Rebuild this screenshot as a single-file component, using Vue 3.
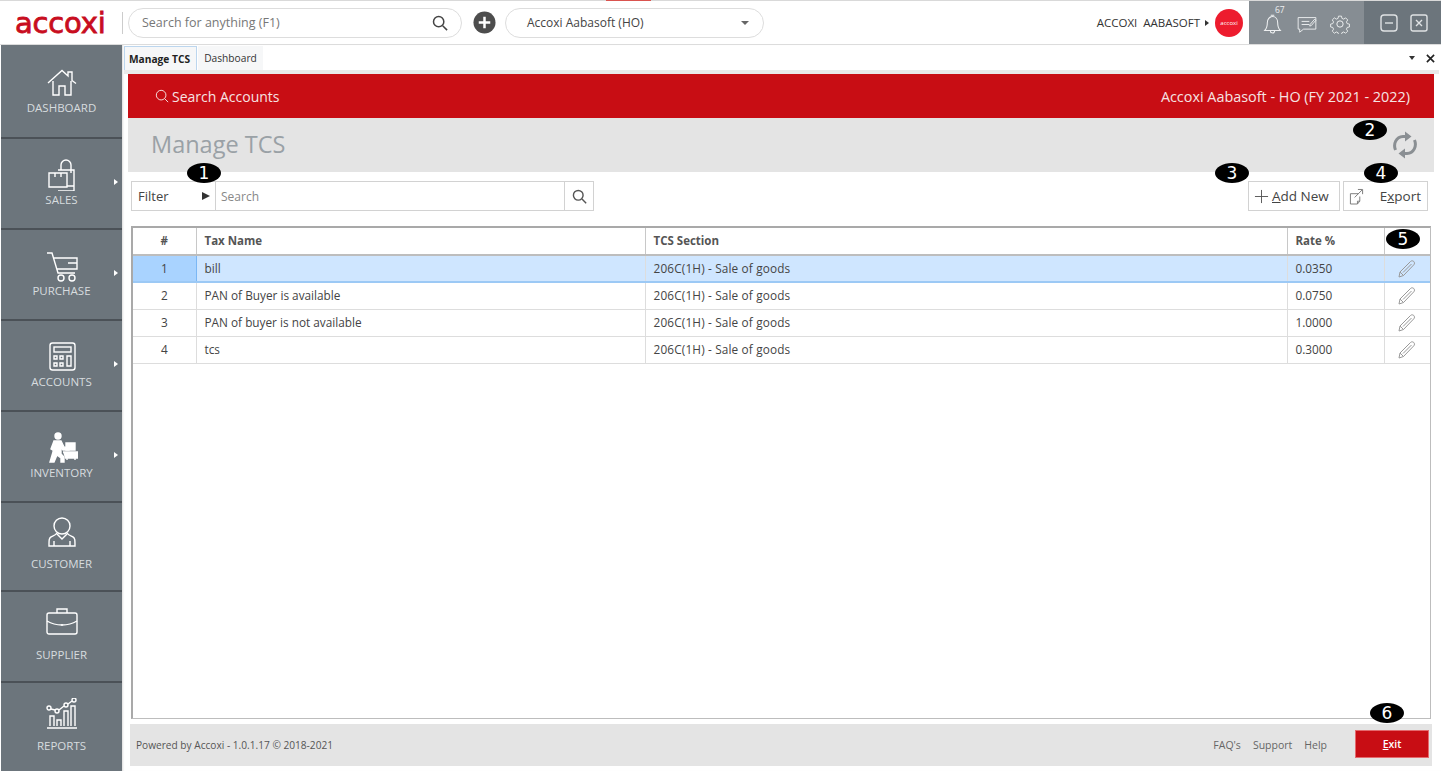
<script setup>
const nav = [
  { label: 'DASHBOARD', low: true, raised: false, arrow: false, icon: '<path d="M2 16 16 3.500l6 5.500V5h4v8.500l4 3M7 14v14h6v-9h6v9h6V14"/>' },
  { label: 'SALES', low: false, raised: false, arrow: true, icon: '<path d="M12 11h16v21H12M12 14H3v14h18V14h-9M28 27H21M9 14v4M15 14v4"/><path d="M15 11V6a5 5 0 0 1 10 0v8"/>' },
  { label: 'PURCHASE', low: false, raised: false, arrow: true, icon: '<path d="M1 3h5l6 20h17M8 8h23v11H11M22 13h9"/><circle cx="15" cy="28" r="3"/><circle cx="26" cy="28" r="3"/>' },
  { label: 'ACCOUNTS', low: false, raised: false, arrow: true, icon: '<rect x="4" y="2" width="25" height="27" rx="2.500"/><rect x="8" y="6" width="17" height="5"/><path d="M8 15h3v3H8zM14 15h3v3h-3zM8 22h3v3H8zM14 22h3v3h-3zM21 15h4v10h-4z"/>' },
  { label: 'INVENTORY', low: false, raised: false, arrow: true, icon: '<circle cx="12" cy="4" r="3" fill="currentColor"/><path d="M8 9h7l3 6 5 1v2h-6l-2-3v7l3 3v5h-3v-4l-4-3-3 7H4l3-10zM8 9l-3 8 2 1" fill="currentColor"/><path d="M20 11h9v7h-9zM17 20h15v6H19M21 26v2M29 26v2" fill="currentColor"/>' },
  { label: 'CUSTOMER', low: false, raised: true, arrow: false, icon: '<circle cx="16" cy="10" r="8"/><path d="M11 17c-1 2-4 3-6 4-2 1-2 3-2 9h26c0-6 0-8-2-9-2-1-5-2-6-4M11 18l5 5 5-5M8 25v5M24 25v5"/>' },
  { label: 'SUPPLIER', low: true, raised: true, arrow: false, icon: '<rect x="1" y="6" width="30" height="21" rx="2"/><path d="M11 6V2h10v4M1 14c5 3 10 4 15 4s10-1 15-4M16 17v2"/>' },
  { label: 'REPORTS', low: true, raised: true, arrow: false, icon: '<path d="M1 30h30M4 28V18h4v10M11 28v-6h4v6M18 28V13h4v15M25 28V8h4v20"/><circle cx="3" cy="10" r="2"/><circle cx="11" cy="13" r="2"/><circle cx="20" cy="7" r="2"/><circle cx="28" cy="2" r="2"/><path d="m5 11 4 1M13 12l5-4M22 6l4-3"/>' },
]
const rows = [
  { id: 1, name: 'bill', section: '206C(1H) - Sale of goods', rate: '0.0350', active: true },
  { id: 2, name: 'PAN of Buyer is available', section: '206C(1H) - Sale of goods', rate: '0.0750', active: false },
  { id: 3, name: 'PAN of buyer is not available', section: '206C(1H) - Sale of goods', rate: '1.0000', active: false },
  { id: 4, name: 'tcs', section: '206C(1H) - Sale of goods', rate: '0.3000', active: false },
]
</script>

<template>
  <div class="app">
    <div class="strip"><span class="strip-red"></span></div>
    <header class="top">
      <div class="logo">accoxi</div>
      <span class="logo-sep"></span>
      <div class="pill search-pill">
        <span>Search for anything (F1)</span>
        <svg class="ic-search" viewBox="0 0 18 18"><circle cx="7.500" cy="7.500" r="5.800"/><path d="m12 12 5 5"/></svg>
      </div>
      <svg class="plus" viewBox="0 0 24 24"><circle cx="12" cy="12" r="11.500" fill="#4d4d4d"/><path d="M12 6v12M6 12h12" stroke="#fff" stroke-width="2.600"/></svg>
      <div class="pill company-pill">
        <span>Accoxi Aabasoft (HO)</span>
        <i class="caret"></i>
      </div>
      <div class="top-right">
        <span class="user">ACCOXI&nbsp; AABASOFT</span>
        <i class="user-arrow"></i>
        <span class="avatar">accoxi</span>
        <div class="tools">
          <span class="bell-count">67</span>
          <svg class="tool bell" viewBox="0 0 22 24"><path d="M2 20c2-2 3-4 3-9 0-4 2.500-7 6-7s6 3 6 7c0 5 1 7 3 9zM9 2.500h4M8.500 20c0 2 1 3 2.500 3s2.500-1 2.500-3"/></svg>
          <svg class="tool chat" viewBox="0 0 26 24"><path d="M1.500 3h23v15h-16l-5 4v-4h-2zM6 8h10M6 12h10"/><path d="m17 12 6-7 1.500 1.500-6 7-2 .5z"/></svg>
          <svg class="tool gear" viewBox="0 0 24 24"><circle cx="12" cy="12" r="3.800"/><path d="M10 1.500h4l.6 3 2.300 1 2.600-1.700 2.800 2.800-1.700 2.600 1 2.300 3 .6v0l-.1 3.900-2.900.6-1 2.300 1.700 2.600-2.800 2.800-2.600-1.700-2.300 1-.6 2.400h-4l-.6-2.400-2.300-1-2.600 1.700-2.800-2.800 1.700-2.600-1-2.300-2.900-.6v-3.900l2.900-.6 1-2.300-1.700-2.600 2.800-2.800 2.600 1.700 2.300-1z" transform="translate(1.200 1.200) scale(.9)"/></svg>
        </div>
        <div class="win">
          <svg viewBox="0 0 18 18"><rect x="1" y="1" width="16" height="16" rx="3"/><path d="M5 9h8"/></svg>
          <svg viewBox="0 0 18 18"><rect x="1" y="1" width="16" height="16" rx="2"/><path d="m6 6 6 6M12 6l-6 6"/></svg>
        </div>
      </div>
    </header>

    <div class="body">
      <aside class="side">
        <a v-for="n in nav" :key="n.label" class="nav-item" :class="{ low: n.low, raised: n.raised }">
          <svg class="nav-icon" viewBox="0 0 32 32" v-html="n.icon"></svg>
          <span class="nav-label">{{ n.label }}</span>
          <i v-if="n.arrow" class="nav-arrow"></i>
        </a>
      </aside>

      <main class="main">
        <div class="tabs">
          <span class="tab active">Manage TCS</span>
          <span class="tab">Dashboard</span>
          <span class="tab-spacer"></span>
          <i class="tab-caret"></i>
          <svg class="tab-x" viewBox="0 0 10 10"><path d="m1 1 8 8M9 1 1 9"/></svg>
        </div>
        <div class="tab-rule"></div>

        <div class="red-bar">
          <span class="red-search">
            <svg viewBox="0 0 16 16"><circle cx="7" cy="7" r="5.500"/><path d="m11 11 4 4"/></svg>
            Search Accounts
          </span>
          <span class="red-company">Accoxi Aabasoft - HO (FY 2021 - 2022)</span>
        </div>

        <div class="title-bar">
          <h1>Manage TCS</h1>
          <svg class="sync" viewBox="0 0 26 30">
            <path d="M3.500 20C1 14 4 7 11 6.500h3M22.500 10C25 16 22 23 15 23.500h-3"/>
            <path class="sync-head" d="M13 1.500 19.500 6.500 13 11.500zM13 18.500 6.500 23.500 13 28.500z"/>
          </svg>
        </div>

        <div class="toolbar">
          <div class="filter">
            <span class="filter-btn">Filter<i></i></span>
            <span class="filter-input">Search</span>
            <span class="filter-go">
              <svg class="ic-search small" viewBox="0 0 18 18"><circle cx="7.500" cy="7.500" r="5.800"/><path d="m12 12 5 5"/></svg>
            </span>
          </div>
          <div class="actions">
            <button class="btn add">
              <svg viewBox="0 0 16 16"><path d="M8 1v14M1 8h14"/></svg>
              <span><u>A</u>dd New</span>
            </button>
            <button class="btn export">
              <svg viewBox="0 0 16 18"><path d="M10 6H1.500v11H9l2.500-3V9M11.500 14H9v3M6 10l8-8M9.500 1.500h5v5"/></svg>
              <span>E<u>x</u>port</span>
            </button>
          </div>
        </div>

        <div class="grid-box">
          <table class="grid">
            <colgroup>
              <col class="c1" /><col class="c2" /><col class="c3" /><col class="c4" /><col class="c5" />
            </colgroup>
            <thead>
              <tr><th class="num">#</th><th>Tax Name</th><th>TCS Section</th><th>Rate %</th><th></th></tr>
            </thead>
            <tbody>
              <tr v-for="r in rows" :key="r.id" :class="{ sel: r.active }">
                <td class="num">{{ r.id }}</td>
                <td>{{ r.name }}</td>
                <td class="section">{{ r.section }}</td>
                <td>{{ r.rate }}</td>
                <td class="edit">
                  <svg viewBox="0 0 18 18"><path d="M2 12 12.500 1.500c1-1 2.500-.8 3.300 0s1 2.300 0 3.300L5.500 15.500 1 17zM2 12l3.500 3.500M5 12.500l8.500-8.500"/></svg>
                </td>
              </tr>
            </tbody>
          </table>
        </div>

        <footer class="foot">
          <span class="powered">Powered by Accoxi - 1.0.1.17 © 2018-2021</span>
          <span class="links"><span>FAQ's</span><span>Support</span><span>Help</span></span>
          <button class="exit"><u>E</u>xit</button>
        </footer>

        <span class="badge b1">1</span>
        <span class="badge b2">2</span>
        <span class="badge b3">3</span>
        <span class="badge b4">4</span>
        <span class="badge b5">5</span>
        <span class="badge b6">6</span>
      </main>
    </div>
  </div>
</template>

<style>
html, body { margin: 0; padding: 0; background: #fff; overflow: hidden; }
</style>

<style scoped>
.app { width: 1441px; height: 771px; display: flex; flex-direction: column; overflow: hidden; background: #fff; font-family: "Open Sans", "Noto Sans", sans-serif; color: #444; }
.strip { height: 1px; background: #d9d9d9; flex: none; padding-left: 606px; }
.strip-red { display: block; width: 45px; height: 1px; background: #d9534f; }

.top { height: 43px; flex: none; display: flex; align-items: center; border-bottom: 1px solid #dcdcdc; position: relative; }
.logo { width: 122px; padding-left: 15px; box-sizing: border-box; font-family: "DejaVu Sans", sans-serif; font-size: 29px; font-weight: 400; color: #c80d20; -webkit-text-stroke: .8px #c80d20; letter-spacing: -.2px; line-height: 40px; height: 40px; }
.logo-sep { width: 1px; height: 22px; background: #ccc; margin-right: 5px; }
.pill { box-sizing: border-box; height: 30px; border: 1px solid #ddd; border-radius: 15px; display: flex; align-items: center; font-size: 12.500px; background: #fff; }
.search-pill { width: 334px; padding: 0 13px; justify-content: space-between; color: #777; }
.ic-search { width: 16px; height: 16px; fill: none; stroke: #444; stroke-width: 1.700; }
.plus { width: 23px; height: 23px; margin: 0 9px 0 11px; flex: none; }
.company-pill { width: 259px; padding: 0 14px 0 21px; justify-content: space-between; color: #444; font-size: 12px; }
.caret { width: 0; height: 0; border-left: 4px solid transparent; border-right: 4px solid transparent; border-top: 4px solid #666; }
.top-right { margin-left: auto; display: flex; align-items: center; height: 43px; }
.user { font-size: 11.500px; color: #333; white-space: nowrap; }
.user-arrow { width: 0; height: 0; border-top: 3.500px solid transparent; border-bottom: 3.500px solid transparent; border-left: 4px solid #333; margin: 0 6px 0 5px; }
.avatar { width: 28px; height: 28px; border-radius: 50%; background: #ed1c2e; color: #fff; font-size: 6px; display: flex; align-items: center; justify-content: center; margin-right: 6px; }
.tools { position: relative; width: 115px; height: 43px; background: #868d93; display: flex; align-items: center; color: #fff; }
.tool { fill: none; stroke: #eef0f1; stroke-width: 1.200; position: absolute; }
.bell { width: 19px; height: 21px; left: 14px; top: 12px; }
.chat { width: 20px; height: 19px; left: 48px; top: 14px; }
.gear { width: 20px; height: 20px; left: 81px; top: 13px; }
.bell-count { position: absolute; left: 26px; top: 3px; font-size: 8.500px; color: #eef0f1; }
.win { width: 77px; height: 43px; background: #6c757c; display: flex; align-items: center; gap: 12px; padding-left: 16px; box-sizing: border-box; }
.win svg { width: 18px; height: 18px; fill: none; stroke: #dfe2e4; stroke-width: 1.400; }

.body { flex: 1; display: flex; min-height: 0; }
.side { width: 121px; margin-left: 1px; flex: none; background: #6c757c; display: grid; grid-template-rows: 94px 91px 91px 91px 91px 89px 91px 1fr; }
.nav-item { position: relative; display: flex; flex-direction: column; align-items: center; padding-top: 20px; box-sizing: border-box; border-bottom: 2px solid #4b5157; color: #fff; }
.nav-item:last-child { border-bottom: 0; }
.nav-item.low { padding-top: 22px; }
.nav-icon { width: 32px; height: 32px; fill: none; stroke: currentColor; stroke-width: 1.400; flex: none; }
.nav-item.raised .nav-icon { margin-top: -7px; margin-bottom: 7px; }
.nav-label { font-size: 11.500px; line-height: 16px; margin-top: 1px; color: #d7dcdf; }
.nav-arrow { position: absolute; right: 4px; top: 40px; width: 0; height: 0; border-top: 3.500px solid transparent; border-bottom: 3.500px solid transparent; border-left: 4px solid #fff; }

.main { flex: 1; min-width: 0; position: relative; display: flex; flex-direction: column; padding-left: 6px; box-shadow: inset 2px 0 2px -1px #ddd; }
.tabs { height: 25px; flex: none; display: flex; align-items: stretch; margin-left: -4px; padding-top: 1px; box-sizing: border-box; font-size: 10.200px; color: #333; }
.tab { display: flex; align-items: center; justify-content: center; width: 65px; background: #f6f7f8; }
.tab.active { width: 73px; padding-right: 2px; font-weight: 700; color: #222; border: solid #bcd6ee; border-width: 1px 1px 0; box-sizing: border-box; margin-right: 1px; }
.tab-spacer { flex: 1; }
.tab-caret { align-self: center; width: 0; height: 0; border-left: 3.500px solid transparent; border-right: 3.500px solid transparent; border-top: 4px solid #333; margin-right: 11px; }
.tab-x { align-self: center; width: 9px; height: 9px; margin-right: 6px; fill: none; stroke: #222; stroke-width: 1.800; }
.tab-rule { height: 4px; flex: none; background: #e9e9e9; margin: 0 2px 0 -4px; }

.red-bar { height: 44px; flex: none; width: 1306px; box-sizing: border-box; background: #c80d14; color: #f6e3e3; display: flex; align-items: center; justify-content: space-between; padding: 0 24px 0 27px; font-size: 14px; }
.red-company { font-size: 14.400px; }
.red-search { display: flex; align-items: center; gap: 3px; }
.red-search svg { width: 14px; height: 14px; fill: none; stroke: #f6e3e3; stroke-width: 1.100; }
.title-bar { height: 54px; flex: none; width: 1306px; box-sizing: border-box; background: #e4e4e4; display: flex; align-items: center; justify-content: space-between; padding: 0 16px 0 23px; }
.title-bar h1 { margin: 0 0 2px; font-size: 23.500px; font-weight: 400; color: #9aa1a6; }
.sync { width: 26px; height: 30px; fill: none; stroke: #8a8f93; stroke-width: 3; }
.sync-head { fill: #8a8f93; stroke: none; }

.toolbar { margin: 9px 13px 0 3px; height: 30px; flex: none; display: flex; justify-content: space-between; }
.filter { width: 463px; display: flex; box-sizing: border-box; border: 1px solid #d2d2d2; background: #fff; }
.filter-btn { width: 84px; box-sizing: border-box; padding: 0 5px 0 6px; border-right: 1px solid #d2d2d2; display: flex; align-items: center; justify-content: space-between; font-size: 13px; color: #444; }
.filter-btn i { width: 0; height: 0; border-top: 4.500px solid transparent; border-bottom: 4.500px solid transparent; border-left: 8px solid #333; }
.filter-input { flex: 1; padding-left: 5px; display: flex; align-items: center; font-size: 12px; color: #888; }
.filter-go { width: 29px; box-sizing: border-box; border-left: 1px solid #d2d2d2; display: flex; align-items: center; justify-content: center; }
.ic-search.small { width: 15px; height: 15px; stroke: #555; }
.actions { display: flex; gap: 3px; }
.btn { height: 30px; box-sizing: border-box; border: 1px solid #d2d2d2; background: #fff; display: flex; align-items: center; font-family: inherit; font-size: 13.500px; color: #444; padding: 0; }
.btn svg { fill: none; stroke: #555; stroke-width: 1; flex: none; }
.add { width: 92px; padding-left: 5px; gap: 3px; }
.add svg { width: 15px; height: 15px; }
.export { width: 85px; padding: 0 6px 0 5px; justify-content: space-between; }
.export svg { width: 15px; height: 17px; stroke: #777; }

.grid-box { margin: 15px 10px 0 3px; height: 493px; flex: none; box-sizing: border-box; border: 1px solid #bdbdbd; border-top: 2px solid #a9a9a9; border-left: 2px solid #a9a9a9; }
.grid { width: 100%; border-collapse: collapse; table-layout: fixed; font-size: 11.800px; color: #444; }
.c1 { width: 63px; }
.c2 { width: 449px; }
.c3 { width: 642px; }
.c4 { width: 97px; }
.grid th, .grid td { height: 27px; padding: 0 8px 1px; box-sizing: border-box; text-align: left; border-right: 1px solid #ddd; border-bottom: 1px solid #ddd; }
.grid td:last-child, .grid th:last-child { border-right: 0; }
.grid th { font-size: 11.500px; font-weight: 700; color: #555; border-bottom: 2px solid #bdbdbd; border-right: 1px solid #c8c8c8; }
.grid .num { text-align: center; }
.grid .section { letter-spacing: .15px; }
.sel td { background: #cfe6ff; border-bottom: 2px solid #9cc9f5; }
.sel td.num { background: #a9d3ff; border-right: 1px solid #7ab7f5; }
.edit { text-align: center !important; padding: 0 !important; }
.edit svg { width: 18px; height: 18px; vertical-align: middle; fill: none; stroke: #999; stroke-width: 1; }

.foot { margin: 5px 0 0 2px; height: 42px; width: 1302px; flex: none; box-sizing: border-box; background: #e4e4e4; display: flex; align-items: center; padding: 0 3px 0 6px; font-size: 10.150px; color: #555; }
.links { margin-left: auto; display: flex; gap: 12px; margin-right: 28px; font-size: 10.500px; color: #666; }
.exit { width: 74px; height: 28px; margin-bottom: 2px; border: 1px solid #e46a6e; background: #c80d14; color: #fff; font-family: inherit; font-size: 10.500px; font-weight: 600; padding: 0; }

.badge { position: absolute; width: 34px; height: 20px; border-radius: 50%; background: #000; color: #fff; font-family: "DejaVu Sans", sans-serif; font-size: 17px; line-height: 20px; text-align: center; }
.b1 { left: 65px; top: 118px; }
.b2 { left: 1231px; top: 75px; }
.b3 { left: 1093px; top: 118px; }
.b4 { left: 1242px; top: 118px; }
.b5 { left: 1264px; top: 184px; }
.b6 { left: 1248px; top: 658px; }
</style>
